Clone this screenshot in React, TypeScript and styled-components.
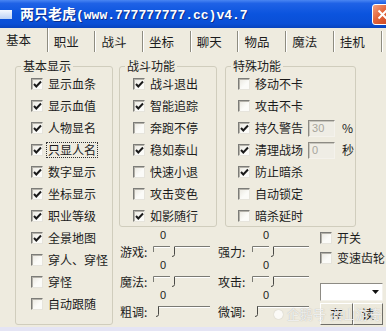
import React from "react";
import styled, { createGlobalStyle } from "styled-components";

const Global = createGlobalStyle`
  html, body { margin: 0; padding: 0; background: #eeebdf; }
  body { font-family: "Noto Sans CJK SC", "Noto Sans", sans-serif; }
`;

const Window = styled.div`
  position: relative;
  width: 386px;
  height: 331px;
  overflow: hidden;
  display: flex;
  flex-direction: column;
  background: #eeebdf;
  color: #1c1c1c;
  font-size: 12px;
  line-height: 14px;
`;

const TitleBar = styled.div`
  flex: none;
  height: 28px;
  display: flex;
  align-items: center;
  background: linear-gradient(#4a86f2 0%, #1f62e6 12%, #0b54de 50%, #0a4fd6 85%, #0843bd 100%);
`;

const TitleIcon = styled.div`
  width: 12px;
  height: 9px;
  margin-right: 8px;
  background: linear-gradient(#f4f8ff, #bcd2f6);
`;

const TitleText = styled.div`
  flex: 1;
  color: #fff;
  font-weight: bold;
  font-size: 14px;
  line-height: 18px;
  white-space: nowrap;
  text-shadow: 1px 1px 0 #0b2f8e;
`;

const Mono = styled.span`
  font-family: "Liberation Mono", monospace;
  font-size: 13px;
`;

const CloseBtn = styled.div`
  box-sizing: border-box;
  width: 21px;
  height: 21px;
  margin-right: -7px;
  border: 1px solid #fff;
  border-radius: 3px;
  background: linear-gradient(135deg, #f4a282, #e2643a 45%, #c9431f);
  display: flex;
  align-items: center;
  justify-content: center;
`;

const TabRow = styled.div`
  flex: none;
  height: 24px;
  display: flex;
  align-items: flex-end;
`;

const Tab = styled.div<{ $active?: boolean }>`
  box-sizing: border-box;
  width: 47.7px;
  height: ${(p) => (p.$active ? 24 : 21)}px;
  padding: ${(p) => (p.$active ? "0 0 1px 6px" : "0 0 0 6px")};
  display: flex;
  align-items: center;
  font-size: 12.5px;
  border-right: 1px solid #8e8c80;
  box-shadow: 1px 0 0 #ffffff;
`;

const Content = styled.div`
  flex: 1;
  display: grid;
  grid-template-columns: 98px 1fr;
  column-gap: 6px;
  padding: 7px 0 2px 15px;
  min-height: 0;
`;

const Group = styled.fieldset<{ $w: number; $h?: number }>`
  box-sizing: border-box;
  width: ${(p) => p.$w}px;
  ${(p) => (p.$h ? `height: ${p.$h}px;` : "")}
  margin: 0;
  padding: 0;
  min-width: 0;
  border: 1px solid #d0cdbd;
  border-radius: 3px;
`;

const Legend = styled.legend`
  margin-left: 5px;
  padding: 0 2px;
  font-size: 12px;
  line-height: 14px;
`;

const List = styled.div<{ $pl: number }>`
  display: flex;
  flex-direction: column;
  padding-left: ${(p) => p.$pl}px;
`;

const CheckRow = styled.div<{ $h?: number }>`
  height: ${(p) => p.$h ?? 22}px;
  display: flex;
  align-items: center;
  white-space: nowrap;
`;

const Box = styled.span`
  box-sizing: border-box;
  flex: none;
  width: 12px;
  height: 12px;
  margin-right: 5px;
  border: 1px solid;
  border-color: #7c7c78 #e6e4dc #e6e4dc #7c7c78;
  box-shadow: inset 1px 1px 0 #b4b2aa;
  background: linear-gradient(135deg, #e9e7df, #fbfbf8 60%);
  display: flex;
  align-items: center;
  justify-content: center;
`;

const Label = styled.span<{ $focus?: boolean }>`
  ${(p) => (p.$focus ? "outline: 1px dotted #333; outline-offset: 0; padding: 0 1px; margin-left: -1px;" : "")}
`;

const Field = styled.span`
  box-sizing: border-box;
  width: 27px;
  height: 17px;
  margin: 0 7px 0 5px;
  padding-left: 3px;
  border: 1px solid;
  border-color: #8d8b84 #f4f2ec #f4f2ec #8d8b84;
  box-shadow: inset 1px 1px 0 #c8c6bd;
  background: #efede5;
  color: #a7a59c;
  font-size: 11px;
  line-height: 15px;
  font-family: "Liberation Sans", sans-serif;
`;

const RightPart = styled.div`
  display: flex;
  flex-direction: column;
`;

const GroupsRow = styled.div`
  display: flex;
  gap: 8px;
`;

const Bottom = styled.div`
  display: flex;
  padding-left: 1px;
`;

const SliderGrid = styled.div`
  display: grid;
  grid-template-columns: 98px 102px;
  grid-auto-rows: 30px;
  margin-top: 1px;
`;

const SliderCell = styled.div`
  display: flex;
  align-items: flex-start;
`;

const SliderLabel = styled.span<{ $w: number }>`
  width: ${(p) => p.$w}px;
  margin-top: 17px;
  white-space: nowrap;
`;

const SliderBox = styled.div`
  display: flex;
  flex-direction: column;
`;

const Zero = styled.span<{ $pl: number }>`
  margin-top: 1px;
  padding-left: ${(p) => p.$pl}px;
  height: 13px;
  line-height: 13px;
  font-size: 11px;
  font-family: "Liberation Sans", sans-serif;
`;

const Track = styled.svg`
  display: block;
  margin-top: 4px;
`;

const RightCol = styled.div`
  width: 63px;
  display: flex;
  flex-direction: column;
  padding-top: 1px;
`;

const Combo = styled.div`
  box-sizing: border-box;
  margin-top: 15px;
  height: 18px;
  border: 1px solid;
  border-color: #8d8b84 #f4f2ec #f4f2ec #8d8b84;
  background: #fff;
  display: flex;
  align-items: center;
  justify-content: flex-end;
  padding-right: 3px;
`;

const Buttons = styled.div`
  display: flex;
  margin-top: 2px;
`;

const Btn = styled.div<{ $w: number }>`
  box-sizing: border-box;
  width: ${(p) => p.$w}px;
  height: 22px;
  border: 1px solid;
  border-color: #ffffff #6f6e68 #6f6e68 #ffffff;
  background: #ece9dc;
  display: flex;
  align-items: center;
  justify-content: center;
  font-size: 12.5px;
`;

const Watermark = styled.div`
  position: absolute;
  right: 4px;
  bottom: 10px;
  display: flex;
  align-items: center;
  gap: 4px;
  font-size: 13px;
  color: rgba(255, 255, 255, 0.8);
  text-shadow: 0 0 1px rgba(110, 110, 110, 0.55);
  pointer-events: none;
  white-space: nowrap;
`;

const WmDot = styled.span`
  width: 9px;
  height: 9px;
  border-radius: 50%;
  background: rgba(255, 255, 255, 0.75);
  box-shadow: 0 0 1px rgba(110, 110, 110, 0.5);
`;

const BottomBand = styled.div`
  flex: none;
  height: 4px;
  background: #e4e4f4;
`;

const Check = ({ on }: { on?: boolean }) => (
  <Box>
    {on && (
      <svg width="9" height="9" viewBox="0 0 9 9">
        <polyline points="1,4 3.3,6.5 8,1.5" fill="none" stroke="#1a1a1a" strokeWidth="2" />
      </svg>
    )}
  </Box>
);

type Item = { t: string; on?: boolean; focus?: boolean; extra?: React.ReactNode };

const CheckList = ({ items, pl }: { items: Item[]; pl: number }) => (
  <List $pl={pl}>
    {items.map((it) => (
      <CheckRow key={it.t}>
        <Check on={it.on} />
        <Label $focus={it.focus}>{it.t}</Label>
        {it.extra}
      </CheckRow>
    ))}
  </List>
);

const Slider = ({ atStart }: { atStart?: boolean }) =>
  atStart ? (
    <Track width="58" height="12" viewBox="0 0 58 12">
      <line x1="5" y1="0.5" x2="57" y2="0.5" stroke="#7a7a74" />
      <line x1="6" y1="1.5" x2="57" y2="1.5" stroke="#ffffff" />
      <path d="M5.5 0.5 V8.5 Q5.5 10.5 3 10.5" fill="none" stroke="#4a4a46" />
    </Track>
  ) : (
    <Track width="58" height="12" viewBox="0 0 58 12">
      <path d="M0.5 6 V0.5 H17" fill="none" stroke="#7a7a74" />
      <line x1="1" y1="1.5" x2="17" y2="1.5" stroke="#ffffff" />
      <line x1="22" y1="0.5" x2="57" y2="0.5" stroke="#7a7a74" />
      <line x1="22" y1="1.5" x2="57" y2="1.5" stroke="#ffffff" />
      <path d="M21.5 0.5 V8.5 Q21.5 10.5 19 10.5" fill="none" stroke="#4a4a46" />
    </Track>
  );

const sliders = [
  { l: "游戏:", w: 33, z: 7 },
  { l: "强力:", w: 34, z: 11 },
  { l: "魔法:", w: 33, z: 7 },
  { l: "攻击:", w: 34, z: 11 },
  { l: "粗调:", w: 33, z: 7, s: true },
  { l: "微调:", w: 34, z: 11, s: true },
];

const tabs = ["基本", "职业", "战斗", "坐标", "聊天", "物品", "魔法", "挂机"];

export default function App() {
  return (
    <>
      <Global />
      <Window>
        <TitleBar>
          <TitleIcon />
          <TitleText>
            两只老虎<Mono>(www.777777777.cc)v4.7</Mono>
          </TitleText>
          <CloseBtn>
            <svg width="11" height="11" viewBox="0 0 11 11">
              <path d="M1.5 1.5 L9.5 9.5 M9.5 1.5 L1.5 9.5" stroke="#fff" strokeWidth="2" />
            </svg>
          </CloseBtn>
        </TitleBar>
        <TabRow>
          {tabs.map((t, i) => (
            <Tab key={t} $active={i === 0}>
              {t}
            </Tab>
          ))}
        </TabRow>
        <Content>
          <Group $w={98}>
            <Legend>基本显示</Legend>
            <CheckList
              pl={15}
              items={[
                { t: "显示血条", on: true },
                { t: "显示血值", on: true },
                { t: "人物显名", on: true },
                { t: "只显人名", on: true, focus: true },
                { t: "数字显示", on: true },
                { t: "坐标显示", on: true },
                { t: "职业等级", on: true },
                { t: "全景地图", on: true },
                { t: "穿人、穿怪" },
                { t: "穿怪" },
                { t: "自动跟随" },
              ]}
            />
          </Group>
          <RightPart>
            <GroupsRow>
              <Group $w={98} $h={168}>
                <Legend>战斗功能</Legend>
                <CheckList
                  pl={13}
                  items={[
                    { t: "战斗退出", on: true },
                    { t: "智能追踪", on: true },
                    { t: "奔跑不停" },
                    { t: "稳如泰山", on: true },
                    { t: "快速小退" },
                    { t: "攻击变色" },
                    { t: "如影随行", on: true },
                  ]}
                />
              </Group>
              <Group $w={131} $h={168}>
                <Legend>特殊功能</Legend>
                <CheckList
                  pl={12}
                  items={[
                    { t: "移动不卡" },
                    { t: "攻击不卡" },
                    { t: "持久警告", on: true, extra: <><Field>30</Field><span>%</span></> },
                    { t: "清理战场", on: true, extra: <><Field>0</Field><span>秒</span></> },
                    { t: "防止暗杀", on: true },
                    { t: "自动锁定" },
                    { t: "暗杀延时" },
                  ]}
                />
              </Group>
            </GroupsRow>
            <Bottom>
              <SliderGrid>
                {sliders.map((s) => (
                  <SliderCell key={s.l}>
                    <SliderLabel $w={s.w}>{s.l}</SliderLabel>
                    <SliderBox>
                      <Zero $pl={s.z}>0</Zero>
                      <Slider atStart={s.s} />
                    </SliderBox>
                  </SliderCell>
                ))}
              </SliderGrid>
              <RightCol>
                <CheckRow $h={20}>
                  <Check />
                  <span>开关</span>
                </CheckRow>
                <CheckRow $h={20}>
                  <Check />
                  <span>变速齿轮</span>
                </CheckRow>
                <Combo>
                  <svg width="7" height="4" viewBox="0 0 7 4">
                    <path d="M0 0 H7 L3.5 4 Z" fill="#111" />
                  </svg>
                </Combo>
                <Buttons>
                  <Btn $w={33}>存</Btn>
                  <Btn $w={30}>读</Btn>
                </Buttons>
              </RightCol>
            </Bottom>
          </RightPart>
        </Content>
        <BottomBand />
        <Watermark>
          <WmDot />
          <span>企鹅号</span>
          <span>西山游奇</span>
        </Watermark>
      </Window>
    </>
  );
}
